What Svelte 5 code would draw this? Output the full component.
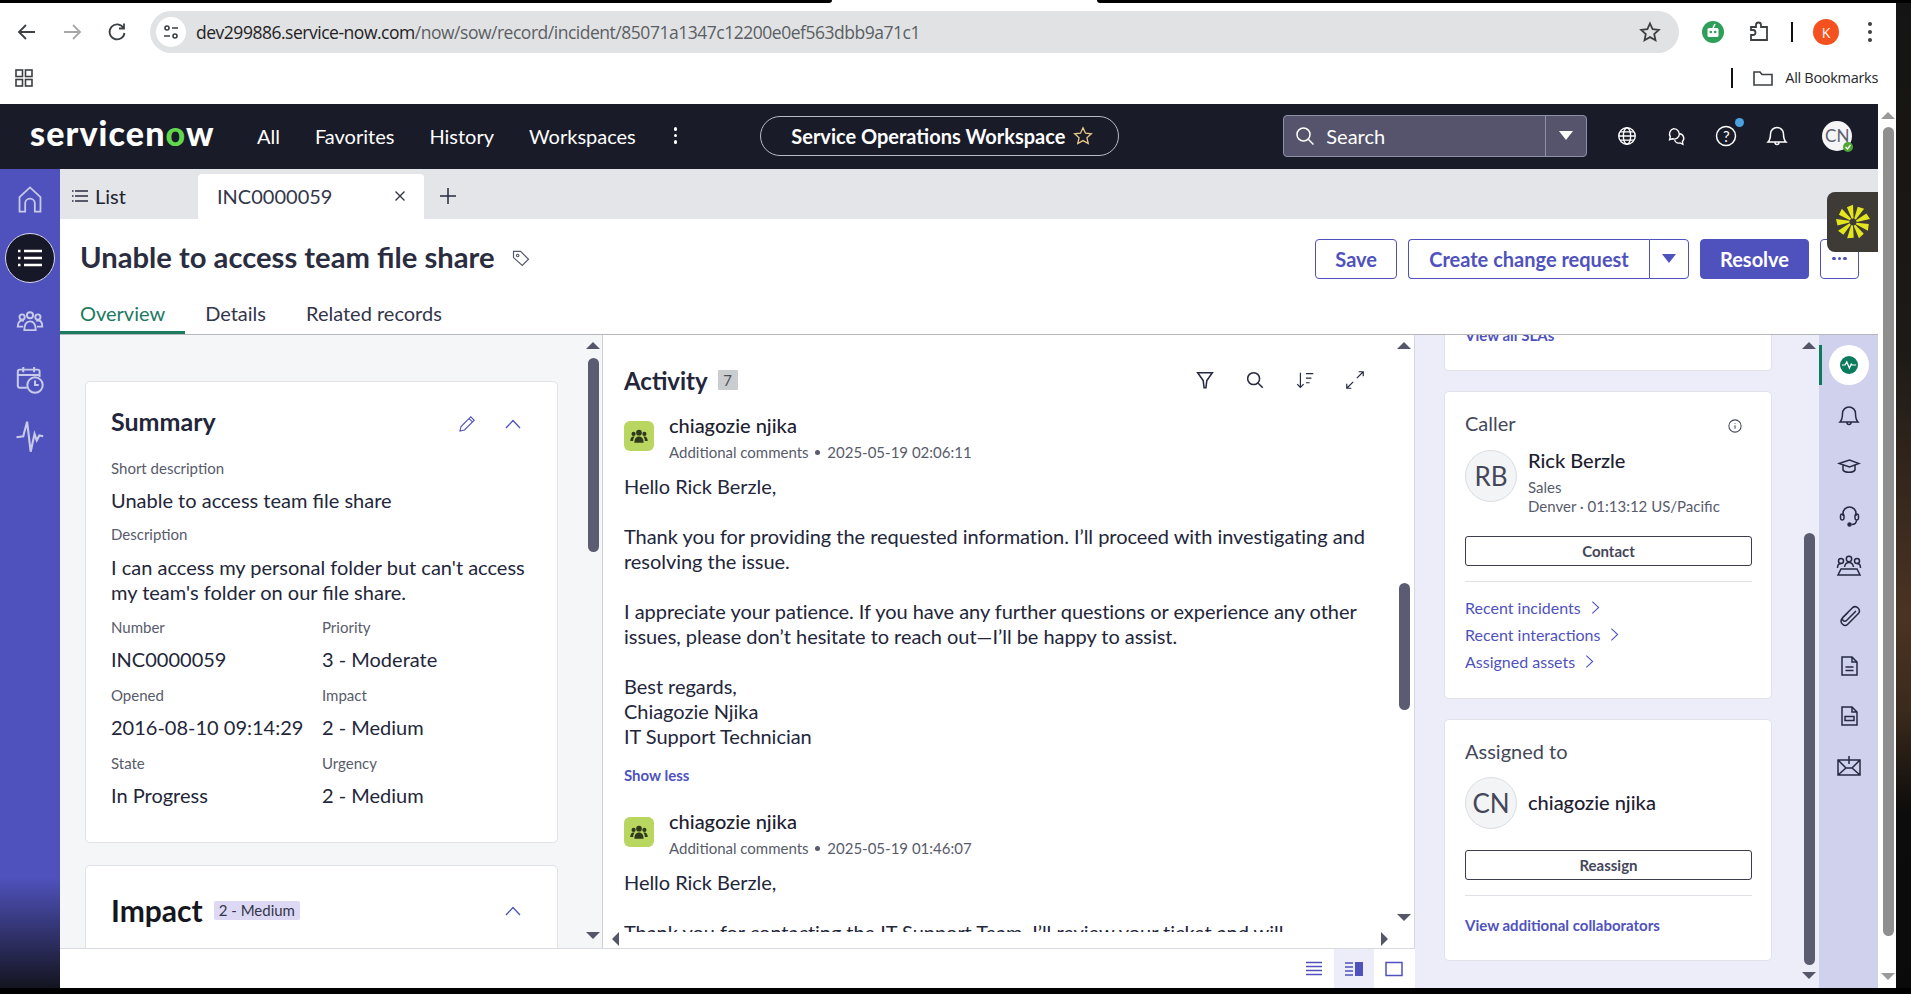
<script>
  const navItems = ['All', 'Favorites', 'History', 'Workspaces'];
  const fields = [
    ['Number', 'INC0000059', 'Priority', '3 - Moderate'],
    ['Opened', '2016-08-10 09:14:29', 'Impact', '2 - Medium'],
    ['State', 'In Progress', 'Urgency', '2 - Medium']
  ];
  const links = ['Recent incidents', 'Recent interactions', 'Assigned assets'];
  const spokes = [0, 40, 80, 120, 160, 200, 240, 280, 320];
</script>

{#snippet vbar(cls)}
  <div class="vbar {cls}">
    <span class="arrow up"></span>
    <span class="thumb"></span>
    <span class="arrow down"></span>
  </div>
{/snippet}

{#snippet chevron()}
  <svg class="chev" viewBox="0 0 16 10" width="16" height="10"><path d="M1 9l7-7.500 7 7.500" /></svg>
{/snippet}

{#snippet people()}
  <svg viewBox="0 0 24 24" width="20" height="20" class="solid"><circle cx="12" cy="8" r="3.400"/><circle cx="5.500" cy="9.500" r="2.500"/><circle cx="18.500" cy="9.500" r="2.500"/><path d="M6.500 20c0-5 2-7.500 5.500-7.500s5.500 2.500 5.500 7.500zM1.500 18c0-3.500 1.500-5.500 3.800-5.500.6 0 1 .1 1.400.3C5.500 14.300 5 16 4.900 18zM22.500 18c0-3.500-1.500-5.500-3.800-5.500-.6 0-1 .1-1.400.3 1.200 1.500 1.700 3.200 1.800 5.200z"/></svg>
{/snippet}

<div class="screen">
  <div class="topstrip"><span class="blackl"></span><span class="notch"></span><span class="blackr"></span></div>
  <div class="desk">
    <div class="browser">
      <header class="toolbar">
        <svg class="ci" viewBox="0 0 24 24" width="24" height="24"><path d="M20 12H5M11 5l-7 7 7 7" /></svg>
        <svg class="ci tb2 dim" viewBox="0 0 24 24" width="24" height="24"><path d="M4 12h15M13 5l7 7-7 7" /></svg>
        <svg class="ci tb3" viewBox="0 0 24 24" width="24" height="24"><path d="M18.500 8A7.500 7.500 0 1 0 19.500 13M19 3.500V8.500H14" /></svg>
        <div class="omni">
          <span class="site"><svg class="ci" viewBox="0 0 20 20" width="20" height="20"><circle cx="6" cy="6" r="2"/><path d="M11 6h6M3 14h6"/><circle cx="14" cy="14" r="2"/></svg></span>
          <span class="url"><b>dev299886.service-now.com</b>/now/sow/record/incident/85071a1347c12200e0ef563dbb9a71c1</span>
          <svg class="ci ostar" viewBox="0 0 24 24" width="24" height="24"><path d="M12 3.500l2.600 5.700 6.200.7-4.600 4.200 1.300 6.100-5.500-3.100-5.500 3.100 1.300-6.100-4.600-4.200 6.200-.7z" /></svg>
        </div>
        <span class="ext"><svg viewBox="0 0 24 24" width="24" height="24"><circle cx="12" cy="12" r="11" fill="#2f9e58"/><rect x="6.500" y="8" width="11" height="9" rx="1.500" fill="#fff"/><circle cx="9.800" cy="12" r="1.300" fill="#2f9e58"/><circle cx="14.200" cy="12" r="1.300" fill="#2f9e58"/><path d="M12 8l2-4" stroke="#fff" stroke-width="1.500"/></svg></span>
        <svg class="ci puzzle" viewBox="0 0 24 24" width="24" height="24"><path d="M4 7h5V5a2.500 2.500 0 0 1 5 0v2h6v13H4v-5h2a2.500 2.500 0 0 0 0-5H4z" /></svg>
        <span class="tbsep"></span>
        <span class="kav">K</span>
        <span class="tbdots"><i></i><i></i><i></i></span>
      </header>
      <div class="bookmarks">
        <svg class="ci apps" viewBox="0 0 20 20" width="20" height="20"><rect x="2" y="2" width="6.500" height="6.500"/><rect x="11.500" y="2" width="6.500" height="6.500"/><rect x="2" y="11.500" width="6.500" height="6.500"/><rect x="11.500" y="11.500" width="6.500" height="6.500"/></svg>
        <span class="bmsep"></span>
        <svg class="ci folder" viewBox="0 0 24 24" width="24" height="24"><path d="M3 6h6l2 2.500h10V19H3z" /></svg>
        <span class="bmtext">All Bookmarks</span>
      </div>

      <div class="page">
        <div class="app">
          <nav class="nav">
            <div class="logo">service<span>n</span><em>o</em><span>w</span></div>
            {#each navItems as item}
              <span class="navitem">{item}</span>
            {/each}
            <span class="navdots"><i></i><i></i><i></i></span>
            <div class="pill">
              <span>Service Operations Workspace</span>
              <svg viewBox="0 0 24 24" width="22" height="22" class="pstar"><path d="M12 3l2.700 5.900 6.400.7-4.800 4.300 1.400 6.300-5.700-3.200-5.700 3.200 1.400-6.300-4.800-4.300 6.400-.7z" /></svg>
            </div>
            <div class="search">
              <svg class="ci wh" viewBox="0 0 24 24" width="24" height="24"><circle cx="10.500" cy="10.500" r="6.500"/><path d="M15.500 15.500l5 5"/></svg>
              <span class="stext">Search</span>
              <span class="sdrop"><i></i></span>
            </div>
            <div class="navicons">
              <svg class="ci wh" viewBox="0 0 24 24" width="22" height="22"><circle cx="12" cy="12" r="9"/><ellipse cx="12" cy="12" rx="4" ry="9"/><path d="M3 12h18M4.500 7.500h15M4.500 16.500h15"/></svg>
              <svg class="ci wh" viewBox="0 0 24 24" width="22" height="22"><path d="M9.500 4a6 6 0 0 1 5.500 8.500 6 6 0 0 1-7 2.500l-3 1 .8-3A6 6 0 0 1 9.500 4z"/><path d="M16 9.500a5 5 0 0 1 3 8.500l.5 3-3-1.500a5 5 0 0 1-6-3"/></svg>
              <span class="help"><svg class="ci wh" viewBox="0 0 24 24" width="24" height="24"><circle cx="12" cy="12" r="9.500"/></svg><b>?</b><i></i></span>
              <svg class="ci wh" viewBox="0 0 24 24" width="24" height="24"><path d="M12 3.500a6.500 6.500 0 0 0-6.500 6.500c0 4.500-.5 6-2.500 8h18c-2-2-2.500-3.500-2.500-8A6.500 6.500 0 0 0 12 3.500zM10 18.500a2 2 0 0 0 4 0"/></svg>
              <span class="navav">CN<i><svg viewBox="0 0 10 10" width="10" height="10"><path d="M2.500 5l2 2 3-4" fill="none" stroke="#fff" stroke-width="1.300"/></svg></i></span>
            </div>
          </nav>

          <div class="body">
            <aside class="side">
              <svg class="ci sd home" viewBox="0 0 32 36" width="26" height="29"><path d="M3 33V15L16 3l13 12v18h-7V23a6 6 0 0 0-12 0v10z"/></svg>
              <span class="listbtn"><svg viewBox="0 0 26 20" width="26" height="20"><g stroke="#fff" stroke-width="2.500"><path d="M7 3h18M7 10h18M7 17h18"/><path d="M1 3h2.500M1 10h2.500M1 17h2.500"/></g></svg></span>
              <svg class="ci sd groups" viewBox="0 0 32 24" width="28" height="21"><circle cx="16" cy="6" r="3.500"/><circle cx="7" cy="8" r="3"/><circle cx="25" cy="8" r="3"/><path d="M9.500 23c0-6 2-10 6.500-10s6.500 4 6.500 10zM9 12.500C4.500 11 2 14 2 19h6M23 12.500c4.500-1.500 7 .5 7 6.500h-6"/></svg>
              <svg class="ci sd cal" viewBox="0 0 32 32" width="29" height="29"><path d="M12 24H4a2 2 0 0 1-2-2V6a2 2 0 0 1 2-2h20a2 2 0 0 1 2 2v6M2 10h24M8 1v6M20 1v6"/><circle cx="21" cy="21" r="8.500"/><path d="M21 16v5h4"/></svg>
              <svg class="ci sd pulse" viewBox="0 0 29 33" width="28" height="32"><path d="M0.500 16.700l7-1 4-15 3.700 31 4-18.400 2.300 6.700 2.700-5 4 .7"/></svg>
            </aside>

            <main class="work">
              <div class="tabbar">
                <div class="tab-list">
                  <svg viewBox="0 0 18 14" width="18" height="14"><g stroke="#2a2d3e" stroke-width="1.300"><path d="M4 2h13M4 7h13M4 12h13M1 2h1.500M1 7h1.500M1 12h1.500"/></g></svg>
                  <span>List</span>
                </div>
                <div class="tab-active">
                  <span>INC0000059</span>
                  <svg class="ci xx" viewBox="0 0 12 12" width="12" height="12"><path d="M1.500 1.500l9 9M10.500 1.500l-9 9"/></svg>
                </div>
                <svg class="ci plus" viewBox="0 0 18 18" width="18" height="18"><path d="M9 1v16M1 9h16"/></svg>
              </div>

              <div class="rechead">
                <div class="titlerow">
                  <h1>Unable to access team file share</h1>
                  <svg class="ci tag" viewBox="0 0 24 24" width="20" height="20"><path d="M3 4h8.500L21 13.500 13.500 21 3 11.500z"/><circle cx="8" cy="9" r="1.500"/></svg>
                  <div class="actions">
                    <button class="btn">Save</button>
                    <div class="split"><button class="btn lft">Create change request</button><button class="btn rgt"><i class="tri"></i></button></div>
                    <button class="btn prim">Resolve</button>
                    <button class="btn more"><i></i><i></i><i></i></button>
                  </div>
                </div>
                <div class="rectabs">
                  <span class="on">Overview</span>
                  <span>Details</span>
                  <span>Related records</span>
                </div>
              </div>

              <div class="panes">
                <div class="leftgroup">
                  <div class="leftpanes">
                    <section class="pane left">
                      <div class="card summary">
                        <div class="chead">
                          <h2>Summary</h2>
                          <svg class="ci pencil" viewBox="0 0 24 24" width="20" height="20"><path d="M3.500 20.500l1.300-5.500L16.500 3.300l4.200 4.200L9 19.200zM14.500 5.500l4 4"/></svg>
                          {@render chevron()}
                        </div>
                        <div class="field first"><label>Short description</label><p>Unable to access team file share</p></div>
                        <div class="field second"><label>Description</label><p>I can access my personal folder but can't access<br/>my team's folder on our file share.</p></div>
                        {#each fields as f}
                          <div class="fgrid">
                            <div class="field"><label>{f[0]}</label><p>{f[1]}</p></div>
                            <div class="field"><label>{f[2]}</label><p>{f[3]}</p></div>
                          </div>
                        {/each}
                      </div>
                      <div class="card impact">
                        <div class="chead">
                          <h2 class="big">Impact</h2>
                          <span class="imptag">2 - Medium</span>
                          {@render chevron()}
                        </div>
                      </div>
                      {@render vbar('vleft')}
                    </section>

                    <section class="pane act">
                      <div class="actscroll">
                        <div class="acthead">
                          <h2>Activity</h2><span class="count">7</span>
                          <div class="acticons">
                            <svg class="ci" viewBox="0 0 24 24" width="22" height="22"><path d="M4 4h16l-6 8.500-1 8-2 0-1-8z"/></svg>
                            <svg class="ci" viewBox="0 0 24 24" width="22" height="22"><circle cx="10.500" cy="10.500" r="6.500"/><path d="M15.500 15.500l5 5"/></svg>
                            <svg class="ci thin" viewBox="0 0 24 24" width="22" height="22"><path d="M7 4v16M3.500 16.500L7 20l3.500-3.500M13 5h8M13 10h6M13 15h4"/></svg>
                            <svg class="ci thin" viewBox="0 0 24 24" width="22" height="22"><path d="M14 10l7-7M16 3h5v5M10 14l-7 7M8 21H3v-5"/></svg>
                          </div>
                        </div>
                        <article class="entry">
                          <div class="ehead">
                            <span class="eav">{@render people()}</span>
                            <div><div class="ename">chiagozie njika</div><div class="esub">Additional comments <i></i> 2025-05-19 02:06:11</div></div>
                          </div>
                          <div class="etext">
                            Hello Rick Berzle,<br/><br/>
                            Thank you for providing the requested information. I’ll proceed with investigating and<br/>resolving the issue.<br/><br/>
                            I appreciate your patience. If you have any further questions or experience any other<br/>issues, please don’t hesitate to reach out—I’ll be happy to assist.<br/><br/>
                            Best regards,<br/>Chiagozie Njika<br/>IT Support Technician
                          </div>
                          <a class="showless" href="#top">Show less</a>
                        </article>
                        <article class="entry">
                          <div class="ehead">
                            <span class="eav">{@render people()}</span>
                            <div><div class="ename">chiagozie njika</div><div class="esub">Additional comments <i></i> 2025-05-19 01:46:07</div></div>
                          </div>
                          <div class="etext">
                            Hello Rick Berzle,<br/><br/>
                            Thank you for contacting the IT Support Team. I’ll review your ticket and will
                          </div>
                        </article>
                      </div>
                      <div class="hbar"><span class="harr l"></span><span class="harr r"></span></div>
                      {@render vbar('vact')}
                    </section>
                  </div>
                  <div class="bottombar">
                    <svg class="ci pur" viewBox="0 0 20 20" width="20" height="20"><path d="M2 3.500h16M2 7.500h16M2 11.500h16M2 15.500h16"/></svg>
                    <span class="bbon"><svg viewBox="0 0 20 20" width="20" height="20"><g stroke="#4f52bd" stroke-width="1.500"><path d="M1 4h8M1 8h8M1 12h8M1 16h8"/></g><rect x="11" y="3" width="8" height="14" fill="#4f52bd"/></svg></span>
                    <svg class="ci pur" viewBox="0 0 20 20" width="20" height="20"><rect x="2" y="3.500" width="16" height="13"/></svg>
                  </div>
                </div>

                <section class="pane rightp">
                  <div class="card rc slas"><a href="#top">View all SLAs</a></div>
                  <div class="card rc caller">
                    <div class="rctitle">Caller
                      <svg class="ci info" viewBox="0 0 16 16" width="14" height="14"><circle cx="8" cy="8" r="7"/><path d="M8 7v4M8 4.500v1"/></svg>
                    </div>
                    <div class="person">
                      <span class="pav">RB</span>
                      <div class="pinfo"><div class="pname">Rick Berzle</div><div class="pmeta">Sales</div><div class="pmeta">Denver · 01:13:12 US/Pacific</div></div>
                    </div>
                    <button class="outline">Contact</button>
                    <hr/>
                    {#each links as l}
                      <a class="rlink" href="#top">{l}<svg viewBox="0 0 10 16" width="9" height="15"><path d="M1.500 1.500L8.500 8l-7 6.500"/></svg></a>
                    {/each}
                  </div>
                  <div class="card rc assigned">
                    <div class="rctitle">Assigned to</div>
                    <div class="person mid">
                      <span class="pav">CN</span>
                      <div class="pname">chiagozie njika</div>
                    </div>
                    <button class="outline">Reassign</button>
                    <hr/>
                    <a class="viewadd" href="#top">View additional collaborators</a>
                  </div>
                  {@render vbar('vright')}
                </section>

                <aside class="rail">
                  <span class="railon"><span class="raildot"><svg class="ci wh" viewBox="0 0 18 18" width="16" height="16"><path d="M1 9h3.500l2-3.500 3 7 2-4.500 1 1H17"/></svg></span></span>
                  <svg class="ci" viewBox="0 0 24 24" width="24" height="24"><path d="M12 3a6.500 6.500 0 0 0-6.500 6.500c0 4.500-.5 6.500-2.500 8.500h18c-2-2-2.500-4-2.500-8.500A6.500 6.500 0 0 0 12 3zM10 18.500a2 2 0 0 0 4 0"/></svg>
                  <svg class="ci" viewBox="0 0 24 24" width="24" height="24"><path d="M2 9.500L12.500 6 22 9.500 12.500 13zM6 11.500V16c2 3 10 3 12 0v-4.500"/></svg>
                  <svg class="ci" viewBox="0 0 24 24" width="24" height="24"><path d="M6 12V9.500a6.500 6.500 0 0 1 13 0V12"/><rect x="3.500" y="10" width="3.500" height="6" rx="1.700"/><rect x="18" y="10" width="3.500" height="6" rx="1.700"/><path d="M19.500 16c0 3-2 4.500-5 4.500"/><circle cx="12.500" cy="20.500" r="1.500" fill="#262a40"/></svg>
                  <svg class="ci" viewBox="0 0 26 24" width="26" height="24"><circle cx="13" cy="5" r="2.700"/><circle cx="5" cy="7" r="2.500"/><circle cx="21" cy="7" r="2.500"/><path d="M8.500 13c.5-3 2-4.500 4.500-4.500s4 1.500 4.500 4.500M1.500 14c0-3 1.500-4.500 3.500-4.500M24.500 14c0-3-1.500-4.500-3.500-4.500M5 15h16l3 6H2z"/></svg>
                  <svg class="ci" viewBox="0 0 24 24" width="24" height="24"><path d="M19 7L9.500 16.500a2.400 2.400 0 0 1-3.400-3.400L15.500 3.700a4.200 4.200 0 0 1 5.900 5.900L10.500 20.500c-2.800 2.800-8.600-1.500-5.500-6l6-6"/></svg>
                  <svg class="ci" viewBox="0 0 24 24" width="24" height="24"><path d="M5 3h10l5 5v13H5zM15 3v5h5M8.500 13h8M8.500 16.500h8"/></svg>
                  <svg class="ci" viewBox="0 0 24 24" width="24" height="24"><path d="M5 3h10l5 5v13H5zM15 3v5h5"/><rect x="8" y="12.500" width="9" height="4"/></svg>
                  <svg class="ci mail" viewBox="0 0 26 24" width="26" height="24"><path d="M2 7h7M17 7h7v15H2V7zM2 7l8 8M24 7l-8 8M2 22l8-7h6l8 7M13 3v8M9 7h8"/></svg>
                </aside>
              </div>
            </main>
          </div>

          <div class="widget">
            <svg viewBox="0 0 40 40" width="40" height="40">
              {#each spokes as a}
                <path d="M19.400 16.500L16.500 4.500l6.500-1.500-1.800 13.500z" transform="rotate({a - 10} 20 20)" />
              {/each}
            </svg>
          </div>
        </div>
        <div class="pagebar"><span class="arrow up"></span><span class="thumb"></span><span class="arrow down"></span></div>
      </div>
    </div>
    <div class="wallpaper"></div>
  </div>
  <div class="bottomstrip"></div>
</div>

<style>
  :global(body) { margin: 0; background: #000; overflow: hidden; }
  * { box-sizing: border-box; }
  .screen { width: 1911px; height: 994px; display: flex; flex-direction: column; background: #000; font-family: Lato, "Liberation Sans", sans-serif; color: #20232f; overflow: hidden; }
  .topstrip { height: 3px; display: flex; background: #fff; flex: none; }
  .blackl { width: 832px; background: #000; border-radius: 0 0 5px 0; }
  .notch { width: 265px; }
  .blackr { flex: 1; background: #000; border-radius: 0 0 0 5px; }
  .desk { flex: 1; display: flex; min-height: 0; }
  .browser { width: 1896px; display: flex; flex-direction: column; background: #fff; }
  .wallpaper { flex: 1; background: linear-gradient(#141414 0, #1c1a17 35%, #4b3322 62%, #3a2a1c 72%, #0d0c0c 82%, #0a0a0a 100%); }
  .bottomstrip { height: 6px; flex: none; background: #000; }

  .ci { fill: none; stroke: #262a40; stroke-width: 1.500; flex: none; }
  .ci.wh { stroke: #fff; }
  .ci.pur { stroke: #4f52bd; }
  .solid { fill: #2f3a1c; }

  .toolbar { height: 58px; display: flex; align-items: center; padding-left: 15px; position: relative; }
  .toolbar .ci { stroke: #3c4043; stroke-width: 1.800; }
  .tb2 { margin-left: 21px; opacity: .45; }
  .tb3 { margin-left: 21px; }
  .omni { width: 1529px; height: 42px; margin-left: 21px; background: #e1e2e3; border-radius: 21px; display: flex; align-items: center; padding: 0 17px 0 6px; }
  .site { width: 30px; height: 30px; border-radius: 50%; background: #fff; display: flex; align-items: center; justify-content: center; flex: none; }
  .site .ci { stroke-width: 1.600; }
  .url { margin-left: 10px; flex: 1; font: 17.500px "Open Sans", sans-serif; color: #5b5f63; letter-spacing: -.48px; white-space: nowrap; }
  .url b { font-weight: 400; color: #1f2124; }
  .ext { margin-left: 22px; display: flex; }
  .puzzle { margin-left: 22px; }
  .tbsep { width: 2px; height: 20px; background: #111; margin-left: 20px; }
  .kav { width: 26px; height: 26px; border-radius: 50%; background: #f4511e; color: #fff; font: 14px "Open Sans", sans-serif; display: flex; align-items: center; justify-content: center; margin-left: 20px; }
  .tbdots { display: flex; flex-direction: column; gap: 4px; margin-left: 29px; }
  .tbdots i { width: 4px; height: 4px; border-radius: 50%; background: #3c4043; }

  .bookmarks { height: 43px; display: flex; align-items: center; padding: 0 18px 10px 14px; }
  .bookmarks .ci { stroke: #3c4043; stroke-width: 1.600; }
  .apps { margin-right: auto; }
  .bmsep { width: 2px; height: 20px; background: #111; }
  .folder { margin-left: 18px; }
  .bmtext { margin-left: 10px; font: 14.500px "Open Sans", sans-serif; letter-spacing: -.3px; color: #26282b; }

  .page { flex: 1; display: flex; min-height: 0; position: relative; }
  .app { width: 1878px; display: flex; flex-direction: column; position: relative; min-height: 0; }
  .pagebar { flex: 1; position: relative; background: #fff; }
  .pagebar .thumb { position: absolute; left: 5px; width: 11px; top: 23px; height: 809px; background: #8f8f8f; border-radius: 6px; }
  .arrow { position: absolute; width: 0; height: 0; border-left: 7px solid transparent; border-right: 7px solid transparent; }
  .arrow.up { border-bottom: 7px solid #55566a; }
  .arrow.down { border-top: 7px solid #55566a; }
  .pagebar .arrow.up { left: 3px; top: 8px; border-bottom-color: #9a9a9a; }
  .pagebar .arrow.down { left: 3px; top: 869px; border-top-color: #9a9a9a; }

  .nav { height: 65px; flex: none; background: #1a1b29; color: #fff; display: flex; align-items: center; padding: 0 0 2px 30px; }
  .logo { width: 227px; flex: none; font: 900 34px Lato, sans-serif; letter-spacing: 1.100px; color: #fff; margin-top: -7px; white-space: nowrap; }
  .logo em { font-style: normal; color: #62d84e; }
  .navitem { font-size: 20px; margin-right: 35px; white-space: nowrap; }
  .navdots { display: flex; flex-direction: column; gap: 3px; margin-left: 3px; }
  .navdots i { width: 3.500px; height: 3.500px; background: #fff; border-radius: 50%; }
  .pill { margin-left: 83px; width: 359px; height: 40px; border: 1px solid #b9bac3; border-radius: 20px; display: flex; align-items: center; padding-left: 30px; font-size: 20px; font-weight: 700; flex: none; }
  .pstar { fill: none; stroke: #e8c98a; stroke-width: 1.400; margin-left: 7px; }
  .search { margin-left: 164px; width: 304px; height: 42px; background: #55546c; border: 1px solid #8f90a3; border-radius: 4px; display: flex; align-items: center; padding-left: 9px; flex: none; }
  .stext { font-size: 20px; margin-left: 9px; flex: 1; }
  .sdrop { width: 41px; height: 100%; border-left: 1px solid #8f90a3; display: flex; align-items: center; justify-content: center; }
  .sdrop i { border-left: 7px solid transparent; border-right: 7px solid transparent; border-top: 9px solid #fff; }
  .navicons { margin-left: 29px; display: flex; align-items: center; gap: 27px; }
  .help { position: relative; width: 24px; height: 24px; display: block; }
  .help b { position: absolute; inset: 0; text-align: center; font: 400 15px/24px Lato, sans-serif; }
  .help i { position: absolute; width: 9px; height: 9px; border-radius: 50%; background: #4aa3e0; right: -6px; top: -6px; }
  .navav { position: relative; width: 30px; height: 30px; border-radius: 50%; background: #f5f5f7; color: #5b6070; font-size: 17px; display: flex; align-items: center; justify-content: center; margin-left: 6px; }
  .navav i { position: absolute; right: -1px; bottom: -1px; width: 10px; height: 10px; background: #4da832; border-radius: 50%; display: flex; }

  .body { flex: 1; display: flex; min-height: 0; }
  .side { width: 60px; flex: none; background: linear-gradient(#4f52bd 0, #4f52bd 708px, #14141f 100%); display: flex; flex-direction: column; align-items: center; padding-top: 16px; }
  .ci.sd { stroke: #c8cbe8; stroke-width: 2.200; }
  .listbtn { width: 50px; height: 50px; border-radius: 50%; background: #171827; border: 1px solid #d5d6ee; display: flex; align-items: center; justify-content: center; margin: 19px 0 27px; flex: none; }
  .cal { margin-top: 35px; }
  .pulse { margin-top: 26px; stroke-width: 1.900; }

  .work { flex: 1; min-width: 0; display: flex; flex-direction: column; }
  .tabbar { height: 50px; flex: none; background: #e3e5e9; display: flex; align-items: flex-end; }
  .tab-list { width: 138px; height: 50px; display: flex; align-items: center; gap: 6px; padding: 3px 0 0 11px; font-size: 20px; }
  .tab-active { width: 226px; height: 45px; background: #fff; border-radius: 4px 4px 0 0; display: flex; align-items: center; padding: 0 18px 1px 19px; font-size: 20px; color: #33364a; justify-content: space-between; }
  .xx { stroke: #33364a; stroke-width: 1.400; }
  .plus { margin: 0 0 14px 15px; stroke-width: 1.500; }

  .rechead { height: 116px; flex: none; background: #fff; border-bottom: 1px solid #b5b7bd; display: flex; flex-direction: column; }
  .titlerow { display: flex; align-items: center; height: 79px; padding: 0 20px; }
  h1 { margin: 0 0 4px; font-size: 29.200px; font-weight: 700; color: #2a2d40; white-space: nowrap; }
  .tag { margin: 0 0 2px 16px; stroke: #55586a; stroke-width: 1.400; }
  .actions { margin-left: auto; margin-right: -1px; display: flex; gap: 11px; align-items: center; }
  .btn { height: 40px; background: #fff; color: #4f52bd; border: 1px solid #4f52bd; border-radius: 4px; font: 700 20px Lato, sans-serif; padding: 0 19px; }
  .split { display: flex; }
  .lft { width: 241px; border-radius: 4px 0 0 4px; border-right: 0; padding: 0; }
  .rgt { width: 40px; border-radius: 0 4px 4px 0; padding: 0; display: flex; align-items: center; justify-content: center; }
  .tri { border-left: 7px solid transparent; border-right: 7px solid transparent; border-top: 9px solid #4f52bd; }
  .prim { background: #4f52bd; color: #fff; width: 109px; padding: 0; }
  .more { width: 39px; padding: 0; display: flex; gap: 2px; align-items: center; justify-content: center; }
  .more i { width: 3.500px; height: 3.500px; border-radius: 50%; background: #4f52bd; }
  .rectabs { display: flex; height: 36px; font-size: 20px; color: #33364a; }
  .rectabs span { padding: 0 20px; line-height: 30px; }
  .rectabs .on { color: #1d7a5f; border-bottom: 3px solid #1d7a5f; }

  .panes { flex: 1; min-height: 0; display: flex; }
  .leftgroup { width: 1355px; flex: none; display: flex; flex-direction: column; min-height: 0; }
  .leftpanes { flex: 1; min-height: 0; display: flex; }
  .pane { position: relative; overflow: hidden; }
  .left { width: 543px; background: #f5f6f8; padding: 46px 0 0 25px; border-right: 1px solid #cfd1d6; flex: none; }
  .act { width: 812px; background: #fff; border-right: 1px solid #d6d8e0; flex: none; display: flex; flex-direction: column; }
  .rightp { width: 404px; background: #ecedf8; flex: none; padding: 0 0 0 29px; }
  .rail { width: 60px; background: #cfd1ed; flex: none; display: flex; flex-direction: column; align-items: center; gap: 26px; padding-top: 10px; position: relative; }
  .mail { margin-top: -1px; }

  .vbar { position: absolute; top: 0; bottom: 0; width: 14px; }
  .vbar .arrow { left: 0; }
  .vbar .arrow.up { top: 7px; }
  .vbar .thumb { position: absolute; left: 1.500px; width: 11px; background: #5b5c71; border-radius: 6px; }
  .vleft { left: 526px; }
  .vleft .thumb { top: 23px; height: 194px; }
  .vleft .arrow.down { top: 597px; }
  .vact { left: 794px; }
  .vact .thumb { top: 248px; height: 127px; }
  .vact .arrow.down { top: 579px; }
  .vright { left: 387px; }
  .vright .thumb { top: 198px; height: 432px; }
  .vright .arrow.down { top: 637px; }

  .card { background: #fff; border: 1px solid #e0e2e8; border-radius: 5px; }
  .summary { width: 473px; height: 462px; padding: 24px 25px 0; }
  .impact { width: 473px; height: 200px; margin-top: 22px; padding: 29px 25px 0; }
  .chead { display: flex; align-items: center; height: 30px; }
  h2 { margin: 0; font-size: 25px; font-weight: 700; color: #23263a; }
  .chev { fill: none; stroke: #4f52bd; stroke-width: 1.300; margin: 6px 11px 0 auto; flex: none; }
  .impact .chev { margin-top: 2px; }
  .chead .pencil { margin: 6px 0 0 auto; stroke: #4f52bd; stroke-width: 1.300; }
  .chead .pencil + .chev { margin-left: 28px; }
  .big { font-size: 30px; color: #15171f; }
  .imptag { margin-left: 11px; background: #ddd9f5; height: 19px; line-height: 19px; padding: 0 5px; font-size: 15px; color: #33364a; border-radius: 2px; }
  .field { margin-bottom: 13.500px; }
  .field.first { margin-top: 22px; margin-bottom: 11.500px; }
  .field.second { margin-bottom: 12.500px; }
  .field.second p { margin-top: 10.500px; }
  label { display: block; font-size: 15px; line-height: 20px; color: #585b6b; }
  .field p { margin: 9.500px 0 0; font-size: 20px; line-height: 25px; color: #23263a; white-space: nowrap; }
  .fgrid { display: grid; grid-template-columns: 211px 1fr; }

  .actscroll { height: 597px; overflow: hidden; padding: 29px 0 0 21px; flex: none; }
  .acthead { display: flex; align-items: center; height: 32px; margin-bottom: 17px; }
  .acthead h2 { font-size: 24px; }
  .count { margin-left: 10px; width: 20px; height: 20px; background: #c9cdd0; color: #4c4f58; text-align: center; font-size: 15px; line-height: 20px; border-radius: 1px; }
  .acticons { margin-left: auto; margin-right: 48px; display: flex; gap: 28px; }
  .acticons .ci { stroke-width: 1.700; }
  .acticons .thin { stroke-width: 1.300; }
  .ehead { display: flex; gap: 15px; }
  .eav { width: 30px; height: 30px; margin-top: 8px; border-radius: 6px; background: #b8d660; display: flex; align-items: center; justify-content: center; flex: none; }
  .ename { font-size: 20px; line-height: 24px; font-weight: 500; color: #1d2030; }
  .esub { font-size: 15px; line-height: 20px; margin-top: 5px; color: #585b6b; display: flex; align-items: center; gap: 3px; white-space: pre; }
  .esub i { width: 5px; height: 5px; border-radius: 50%; background: #585b6b; }
  .etext { margin-top: 11.500px; font-size: 20px; line-height: 25px; color: #23263a; white-space: nowrap; letter-spacing: -.04px; }
  .showless { display: block; margin-top: 16px; height: 20px; font-size: 15px; line-height: 20px; font-weight: 700; color: #4f52bd; text-decoration: none; }
  .entry + .entry { margin-top: 24.500px; }
  .hbar { height: 16px; position: relative; flex: none; }
  .harr { position: absolute; top: 0; width: 0; height: 0; border-top: 7px solid transparent; border-bottom: 7px solid transparent; }
  .harr.l { left: 9px; border-right: 7px solid #55566a; }
  .harr.r { left: 778px; border-left: 7px solid #55566a; }

  .rc { width: 328px; padding: 0 20px; }
  .slas { height: 37px; margin-top: -1px; border-top: 0; border-radius: 0 0 5px 5px; overflow: hidden; }
  .slas a { display: block; margin-top: -9px; font-size: 15px; line-height: 20px; font-weight: 700; color: #4f52bd; text-decoration: none; }
  .caller { height: 308px; margin-top: 20px; padding-top: 20px; }
  .assigned { height: 242px; margin-top: 20px; padding-top: 20px; }
  .rctitle { font-size: 20px; line-height: 22px; color: #44475a; display: flex; justify-content: space-between; align-items: center; }
  .info { margin-right: 9px; margin-top: 5px; stroke: #44475a; stroke-width: 1.200; }
  .person { display: flex; gap: 11px; margin-top: 16px; }
  .person.mid { align-items: center; margin-top: 15px; }
  .person.mid .pname { margin-top: -3px; }
  .pav { width: 52px; height: 52px; border-radius: 50%; background: #f3f4f6; border: 1px solid #dcdde2; display: flex; align-items: center; justify-content: center; font-size: 26px; color: #44475a; flex: none; }
  .pname { font-size: 20px; line-height: 24px; color: #1d2030; font-weight: 500; }
  .pmeta { font-size: 15px; line-height: 18px; color: #585b6b; }
  .pinfo .pmeta:nth-child(2) { margin-top: 6px; }
  .pinfo .pmeta:nth-child(3) { margin-top: 1px; }
  .pinfo { margin-top: -2px; }
  .outline { display: block; width: 287px; height: 30px; background: #fff; border: 1px solid #3b3d4a; border-radius: 3px; font: 700 15px Lato, sans-serif; color: #44475a; margin-top: 21px; padding: 0; }
  hr { border: 0; border-top: 1px solid #dfe1e6; margin: 15px 0 0; width: 287px; }
  .rlink { display: flex; align-items: center; gap: 10px; height: 27px; font-size: 16px; color: #4f52bd; text-decoration: none; }
  .rlink:first-of-type { margin-top: 12px; }
  .rlink svg { fill: none; stroke: #4f52bd; stroke-width: 1.200; }
  .viewadd { display: block; margin-top: 19px; font-size: 15px; font-weight: 700; color: #4f52bd; text-decoration: none; line-height: 20px; }

  .railon { width: 40px; height: 40px; border-radius: 50%; background: #fff; display: flex; align-items: center; justify-content: center; margin-bottom: -7px; flex: none; }
  .rail::before { content: ""; position: absolute; left: 0; top: 10px; width: 3px; height: 40px; background: #0b7b5d; }
  .raildot { width: 18px; height: 18px; border-radius: 50%; background: #0b7b5d; display: flex; align-items: center; justify-content: center; }
  .raildot .ci { stroke-width: 1.400; }

  .bottombar { height: 40px; flex: none; background: #fff; border-top: 1px solid #d8dadf; display: flex; align-items: center; justify-content: flex-end; padding-right: 1px; }
  .bottombar > svg { margin: 0 10px; }
  .bbon { width: 40px; height: 39px; background: #ecedf8; display: flex; align-items: center; justify-content: center; }

  .widget { position: absolute; right: 0; top: 88px; width: 51px; height: 60px; background: #3e3a36; border-radius: 8px 0 0 8px; display: flex; align-items: center; justify-content: center; }
  .widget path { fill: #e4e61c; }
</style>
